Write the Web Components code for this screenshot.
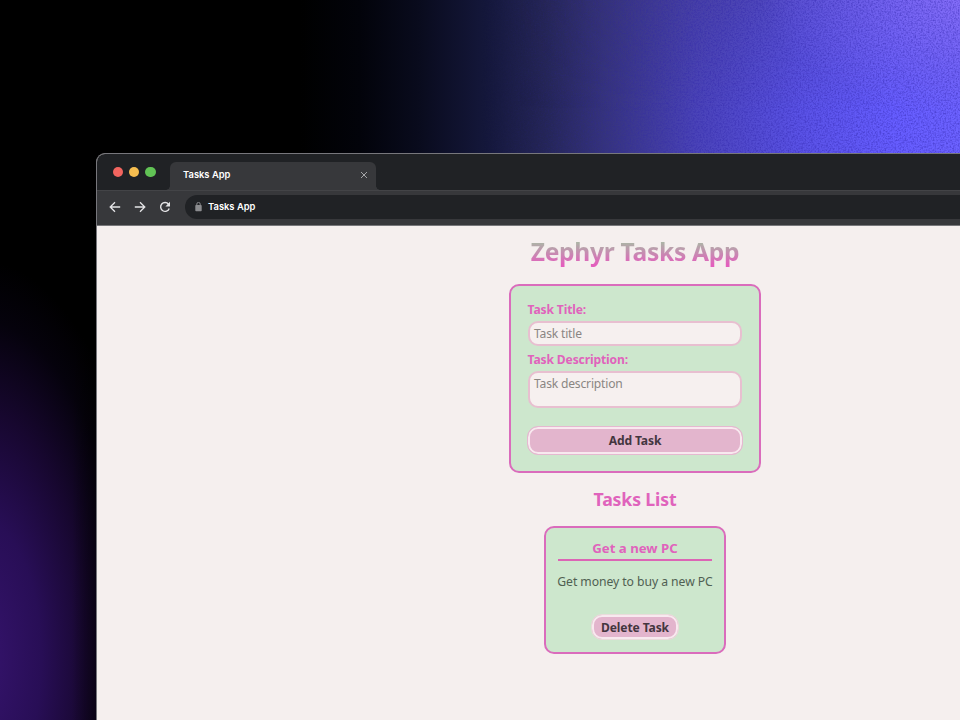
<!DOCTYPE html>
<html lang="en">
<head>
<meta charset="utf-8">
<title>Tasks App</title>
<style>
html,body{margin:0;width:960px;height:720px;overflow:hidden;background:#000}
</style>
</head>
<body>
<desktop-scene>
<browser-window>
<tasks-page></tasks-page>
</browser-window>
</desktop-scene>
<script>
const define = (name, html) => {
  const t = document.createElement('template');
  t.innerHTML = html;
  customElements.define(name, class extends HTMLElement {
    constructor() {
      super();
      this.attachShadow({mode: 'open'}).appendChild(t.content.cloneNode(true));
    }
  });
};

define('desktop-scene', `<style>
:host{display:block;box-sizing:border-box;width:960px;height:720px;padding:153px 0 0 96px;overflow:hidden;position:relative;background:#000}
svg{position:absolute;left:0;top:0}
.content{position:relative;height:567px;width:900px}
</style>
<svg width="960" height="720" viewBox="0 0 960 720">
<defs>
<linearGradient id="top" gradientUnits="userSpaceOnUse" x1="300" y1="0" x2="960" y2="0">
<stop offset="0" stop-color="#000"/><stop offset=".09" stop-color="#02030a"/><stop offset=".18" stop-color="#090b1d"/><stop offset=".28" stop-color="#14173a"/><stop offset=".37" stop-color="#242556"/><stop offset=".46" stop-color="#35337c"/><stop offset=".6" stop-color="#4a43b8"/><stop offset=".76" stop-color="#5a52e6"/><stop offset=".9" stop-color="#665dff"/><stop offset="1" stop-color="#6c62ff"/>
</linearGradient>
<radialGradient id="corner" gradientUnits="userSpaceOnUse" cx="0" cy="0" r="1" gradientTransform="translate(980 -10) scale(220 130)">
<stop offset="0" stop-color="#8f74ff" stop-opacity=".9"/><stop offset="1" stop-color="#7c68ff" stop-opacity="0"/>
</radialGradient>
<linearGradient id="dim" x1="0" y1="0" x2="0" y2="1"><stop offset="0" stop-color="#383050" stop-opacity=".18"/><stop offset=".7" stop-color="#383050" stop-opacity="0"/></linearGradient>
<radialGradient id="left" gradientUnits="userSpaceOnUse" cx="0" cy="0" r="1" gradientTransform="translate(-20 660) scale(175 400)">
<stop offset="0" stop-color="#36146e"/><stop offset=".35" stop-color="#280e56"/><stop offset=".62" stop-color="#17072f"/><stop offset=".85" stop-color="#05020c"/><stop offset="1" stop-color="#000"/>
</radialGradient>
<linearGradient id="edge" x1="0" x2="1" y1="0" y2="0"><stop offset="0" stop-color="#000" stop-opacity="0"/><stop offset="1" stop-color="#000" stop-opacity=".5"/></linearGradient>
<filter id="grain" x="0" y="0" width="100%" height="100%" color-interpolation-filters="sRGB"><feTurbulence type="fractalNoise" baseFrequency=".6" numOctaves="2" seed="4"/><feColorMatrix values="0 0 0 0 .18  0 0 0 0 .14  0 0 0 0 .66  1.1 0 0 0 -.44"/></filter>
<linearGradient id="fade"><stop offset=".5" stop-color="#000"/><stop offset=".75" stop-color="#fff"/></linearGradient>
<mask id="m"><rect width="960" height="160" fill="url(#fade)"/></mask>
</defs>
<rect width="960" height="160" fill="url(#top)"/>
<rect x="520" width="440" height="160" fill="url(#dim)" mask="url(#m)"/>
<rect width="960" height="160" fill="url(#corner)"/>
<g mask="url(#m)"><rect width="960" height="160" filter="url(#grain)"/></g>
<rect y="160" width="100" height="560" fill="url(#left)"/>
<rect x="72" y="160" width="26" height="560" fill="url(#edge)"/>
</svg>
<div class="content"><slot></slot></div>`);

define('browser-window', `<style>
:host{display:flex;flex-direction:column;box-sizing:border-box;width:900px;height:600px;border:1px solid #77777c;border-width:1px 0 0 1px;border-radius:9px 0 0 0;overflow:hidden;background:#f5efee;font-family:Inter,"Liberation Sans",sans-serif}
.tabs{box-sizing:border-box;height:37px;flex:none;background:#202225;display:flex;align-items:flex-end;padding-left:16px;border-bottom:1px solid #434447}
.toolbar{box-sizing:border-box;height:35px;flex:none;background:#37383b;border-bottom:1px solid #77777a;display:flex;align-items:center;padding:0 0 2px 12px}
.page{flex:1;display:block}
</style>
<div class="tabs"><traffic-lights></traffic-lights><browser-tab>Tasks App</browser-tab></div>
<div class="toolbar"><nav-buttons></nav-buttons><address-bar>Tasks App</address-bar></div>
<div class="page"><slot></slot></div>`);

define('traffic-lights', `<style>
:host{display:flex;gap:6px;height:23px;width:57px}
i{width:10.2px;height:10.2px;border-radius:50%;flex:none}
</style><i style="background:#f2655f"></i><i style="background:#f6be50"></i><i style="background:#61c355"></i>`);

define('browser-tab', `<style>
:host{display:flex;align-items:center;justify-content:space-between;box-sizing:border-box;width:206px;height:28px;border-radius:6px 6px 0 0;background:#37383b;color:#fff;font-size:9.4px;font-weight:600;padding:0 8px 2px 13px;position:relative}
:host::before,:host::after{content:"";position:absolute;bottom:0;width:4px;height:4px}
:host::before{left:-4px;background:radial-gradient(circle at 0 0,transparent 3.5px,#37383b 4px)}
:host::after{right:-4px;background:radial-gradient(circle at 100% 0,transparent 3.5px,#37383b 4px)}
svg{display:block}span{padding-bottom:2px}
</style><span><slot></slot></span><svg width="8" height="8" viewBox="0 0 8 8"><path d="M1 1 7 7M7 1 1 7" stroke="#a5a6a8" stroke-width="1"/></svg>`);

define('nav-buttons', `<style>
:host{display:flex;gap:13px;width:76px;flex:none}
svg{display:block;flex:none}
</style>
<svg width="12" height="12" viewBox="0 0 12 12" fill="none" stroke="#e4e4e6" stroke-width="1.3"><path d="M11.2 6H1.5M6 1.2 1.2 6 6 10.8"/></svg>
<svg width="12" height="12" viewBox="0 0 12 12" fill="none" stroke="#e4e4e6" stroke-width="1.3"><path d="M.8 6h9.7M6 1.2 10.8 6 6 10.8"/></svg>
<svg width="12" height="12" viewBox="0 0 12 12"><path d="M9.5 3.2A4.4 4.4 0 1 0 10.2 7.4" fill="none" stroke="#e4e4e6" stroke-width="1.4"/><path d="M11 .8V5.4H6.4Z" fill="#e4e4e6"/></svg>`);

define('address-bar', `<style>
:host{display:flex;flex:none;align-items:center;gap:6px;box-sizing:border-box;width:900px;height:24px;border-radius:12px;background:#202225;color:#fff;padding-left:10px;font-size:9.4px;font-weight:600}
svg{display:block}span{padding-bottom:2px}
</style><svg width="7" height="10" viewBox="0 0 7 10"><rect x=".3" y="3" width="6.4" height="6.3" rx=".8" fill="#8b8c8f"/><path d="M1.8 3.2V2.1a1.7 1.7 0 0 1 3.4 0v1.1" fill="none" stroke="#8b8c8f"/></svg><span><slot></slot></span>`);

define('tasks-page', `<style>
:host{display:flex;flex-direction:column;align-items:center;box-sizing:border-box;width:1076px;padding-top:8px;font-family:"Noto Sans","Open Sans",sans-serif;color:#444}
h1{margin:0;font-size:24.6px;line-height:36px;font-weight:700;letter-spacing:-.3px;white-space:nowrap;background:linear-gradient(#a9b9a5 20%,#e35fbd 85%);-webkit-background-clip:text;background-clip:text;color:transparent}
h2{margin:14px 0 0;font-size:17.7px;line-height:24px;font-weight:700;letter-spacing:-.15px;color:#e063bc}
task-form{margin-top:14px}task-card{margin-top:15px}
</style>
<h1>Zephyr Tasks App</h1>
<task-form></task-form>
<h2>Tasks List</h2>
<task-card><span slot="title">Get a new PC</span><span slot="text">Get money to buy a new PC</span></task-card>`);

define('task-form', `<style>
:host{display:flex;flex-direction:column;box-sizing:border-box;width:252px;height:189px;border:2px solid #da6cbc;border-radius:10px;background:#cde7cd;padding:14px 17px 0}
text-field+text-field{margin-top:4px}
soft-button{margin:18px 0 0 -1px}
</style>
<text-field style="--h:25px"><span slot="label">Task Title:</span>Task title</text-field>
<text-field style="--h:37px"><span slot="label">Task Description:</span>Task description</text-field>
<soft-button style="--w:216px;--ring:#e5b8d0">Add Task</soft-button>`);

define('text-field', `<style>
:host{display:block;font-size:12.1px}
.l{font-weight:700;letter-spacing:-.13px;color:#e063bc;line-height:20px;height:21px;margin-left:-.5px;white-space:nowrap}
.f{box-sizing:border-box;height:var(--h);border:2px solid #e8bfd0;border-radius:10px;background:#f6f0ef;color:#8a8683;padding:1px 0 0 4px;letter-spacing:-.19px;line-height:19px;white-space:nowrap}
</style><div class="l"><slot name="label"></slot></div><div class="f"><slot></slot></div>`);

define('soft-button', `<style>
:host{display:flex;align-items:center;justify-content:center;box-sizing:border-box;width:var(--w);height:var(--bh,29px);border:1px solid var(--ring,#e9dcdb);border-radius:11px;background:#e3b5cd;box-shadow:inset 0 0 0 2px #f8e9ef;font-size:12.1px;letter-spacing:-.12px;font-weight:700;color:#44363f;white-space:nowrap}
</style><span><slot></slot></span>`);

define('task-card', `<style>
:host{display:flex;flex-direction:column;align-items:center;box-sizing:border-box;width:182px;height:128px;border:2px solid #da6cbc;border-radius:10px;background:#cde7cd;padding-top:10px}
.t{box-sizing:border-box;width:154px;height:23px;line-height:20px;border-bottom:2px solid #dc65b5;text-align:center;font-size:13.2px;letter-spacing:0;font-weight:700;color:#e063bc}
.d{margin-top:11px;height:20px;line-height:20px;font-size:12.2px;letter-spacing:-.06px;color:#506052;white-space:nowrap}
soft-button{margin-top:22px}
</style><div class="t"><slot name="title"></slot></div><div class="d"><slot name="text"></slot></div><soft-button style="--w:88px;--bh:26px">Delete Task</soft-button>`);
</script>
</body>
</html>
